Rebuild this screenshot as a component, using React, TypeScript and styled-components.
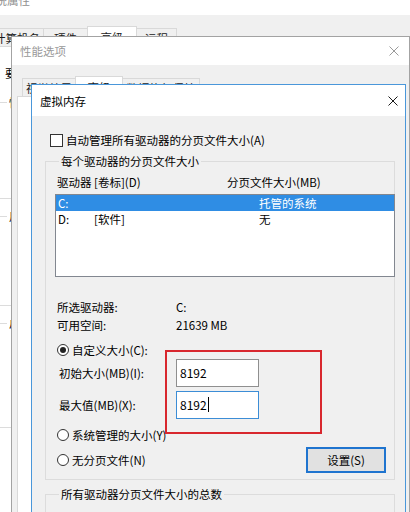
import React from "react";
import styled, { createGlobalStyle } from "styled-components";

const FONT = `"Noto Sans CJK SC", "Noto Sans", "Liberation Sans", sans-serif`;

const GlobalStyle = createGlobalStyle`
  html, body { margin: 0; padding: 0; background: #f0f0f0; }
  body { font-family: ${FONT}; }
`;

const Desktop = styled.div`
  position: relative;
  width: 410px;
  height: 512px;
  overflow: hidden;
  background: #f0f0f0;
  font-family: ${FONT};
  font-size: 11.5px;
  line-height: 14px;
  color: #000;
`;

const Win = styled.div<{ $x: number; $y: number; $w: number; $h: number; $z: number; $border: string }>`
  position: absolute;
  left: ${(p) => p.$x}px;
  top: ${(p) => p.$y}px;
  width: ${(p) => p.$w}px;
  height: ${(p) => p.$h}px;
  z-index: ${(p) => p.$z};
  box-sizing: border-box;
  border: 1px solid ${(p) => p.$border};
  background: #f0f0f0;
  display: flex;
  flex-direction: column;
`;

const TitleBar = styled.div<{ $h: number; $pl: number; $pr: number; $color: string }>`
  flex: none;
  height: ${(p) => p.$h}px;
  background: #fff;
  display: flex;
  align-items: center;
  justify-content: space-between;
  padding: 0 ${(p) => p.$pr}px 0 ${(p) => p.$pl}px;
  color: ${(p) => p.$color};
  white-space: nowrap;
`;

const Body = styled.div<{ $pad: string }>`
  flex: 1;
  display: flex;
  flex-direction: column;
  padding: ${(p) => p.$pad};
  min-height: 0;
`;

const TabRow = styled.div<{ $mt: number; $ml: number }>`
  display: flex;
  align-items: flex-end;
  height: 20px;
  margin: ${(p) => p.$mt}px 0 0 ${(p) => p.$ml}px;
  flex: none;
`;

const Tab = styled.div<{ $active?: boolean; $w: number }>`
  box-sizing: border-box;
  width: ${(p) => p.$w}px;
  height: ${(p) => (p.$active ? 21 : 18)}px;
  margin-right: -1px;
  margin-bottom: ${(p) => (p.$active ? -1 : 0)}px;
  background: ${(p) => (p.$active ? "#fff" : "#f0f0f0")};
  border: 1px solid #d9d9d9;
  border-bottom: none;
  display: flex;
  align-items: center;
  justify-content: center;
  position: relative;
  z-index: ${(p) => (p.$active ? 2 : 1)};
  white-space: nowrap;
  color: #1a1a1a;
`;

const TabPanel = styled.div<{ $pad: string }>`
  flex: 1;
  background: #fff;
  border: 1px solid #d9d9d9;
  padding: ${(p) => p.$pad};
  display: flex;
  flex-direction: column;
`;

const PlainText = styled.div<{ $ml: number }>`
  margin-left: ${(p) => p.$ml}px;
  line-height: 16px;
  white-space: nowrap;
`;

const BackGroup = styled.fieldset<{ $h: number; $mt: number }>`
  margin: ${(p) => p.$mt}px 0 0 0;
  padding: 0;
  height: ${(p) => p.$h}px;
  box-sizing: border-box;
  border: 1px solid #dcdcdc;
  min-width: 0;
  & > legend {
    margin-left: 8px;
    padding: 0 2px;
    line-height: 14px;
  }
`;

const CloseGlyph = ({ color }: { color: string }) => (
  <svg width="10" height="10" viewBox="0 0 10 10" style={{ display: "block" }}>
    <path d="M0.5 0.5 L9.5 9.5 M9.5 0.5 L0.5 9.5" stroke={color} strokeWidth="1" fill="none" />
  </svg>
);

const CheckRow = styled.div`
  display: flex;
  align-items: center;
  gap: 3px;
  height: 16px;
  padding-left: 5px;
  white-space: nowrap;
`;

const CheckBox = styled.span`
  box-sizing: border-box;
  width: 13px;
  height: 13px;
  border: 1px solid #333;
  background: #fff;
  flex: none;
`;

const Group = styled.fieldset<{ $mt: number; $pad: string }>`
  margin: ${(p) => p.$mt}px 0 0 0;
  padding: ${(p) => p.$pad};
  border: 1px solid #dcdcdc;
  min-width: 0;
  display: flex;
  flex-direction: column;
  & > legend {
    margin-left: 4px;
    padding: 0 2px;
    line-height: 14px;
    white-space: nowrap;
  }
`;

const HeaderRow = styled.div`
  display: flex;
  height: 14px;
  padding-left: 2px;
  white-space: nowrap;
`;

const Col = styled.span<{ $w?: number }>`
  flex: none;
  width: ${(p) => (p.$w ? `${p.$w}px` : "auto")};
  white-space: nowrap;
`;

const ListBox = styled.div`
  margin: 5px -1px 0 0;
  height: 83px;
  box-sizing: border-box;
  border: 1px solid #828790;
  background: #fff;
  display: flex;
  flex-direction: column;
`;

const ListRow = styled.div<{ $selected?: boolean }>`
  display: flex;
  align-items: center;
  height: 16px;
  padding-left: 2px;
  background: ${(p) => (p.$selected ? "#2f8de4" : "transparent")};
  color: ${(p) => (p.$selected ? "#fff" : "#000")};
`;

const InfoBlock = styled.div`
  margin-top: 21px;
  display: flex;
  flex-direction: column;
`;

const InfoRow = styled.div`
  display: flex;
  line-height: 18px;
  height: 18px;
  padding-left: 2px;
`;

const RadioRow = styled.div<{ $mt: number; $h?: number }>`
  display: flex;
  align-items: center;
  justify-content: space-between;
  margin-top: ${(p) => p.$mt}px;
  height: ${(p) => p.$h ?? 16}px;
  padding-left: 2px;
`;

const RadioLabel = styled.label`
  display: flex;
  align-items: center;
  gap: 3px;
  white-space: nowrap;
`;

const Radio = styled.span<{ $checked?: boolean }>`
  box-sizing: border-box;
  width: 12px;
  height: 12px;
  border-radius: 50%;
  border: 1px solid #333;
  background: #fff;
  display: flex;
  align-items: center;
  justify-content: center;
  flex: none;
  &::after {
    content: "";
    width: 6px;
    height: 6px;
    border-radius: 50%;
    background: ${(p) => (p.$checked ? "#222" : "transparent")};
  }
`;

const SizeBlock = styled.div`
  margin-top: 1px;
  display: flex;
  flex-direction: column;
  gap: 4px;
`;

const SizeRow = styled.div`
  display: flex;
  align-items: center;
  height: 28px;
  padding-left: 4px;
`;

const SizeLabel = styled.span`
  width: 117px;
  flex: none;
  white-space: nowrap;
`;

const ValueBox = styled.div<{ $focused?: boolean }>`
  box-sizing: border-box;
  width: 83px;
  height: 28px;
  background: #fff;
  border: 1px solid ${(p) => (p.$focused ? "#3c8dd6" : "#8f8f8f")};
  padding: 5px 0 0 3px;
  font-size: 12px;
  line-height: 16px;
  display: flex;
  align-items: flex-start;
`;

const Caret = styled.span`
  display: inline-block;
  width: 1px;
  height: 15px;
  margin-left: 1px;
  background: #000;
`;

const Button = styled.div`
  box-sizing: border-box;
  width: 80px;
  height: 26px;
  margin-right: 8px;
  border: 2px solid #1f74cf;
  background: #e1e1e1;
  display: flex;
  align-items: center;
  justify-content: center;
  white-space: nowrap;
`;

const Highlight = styled.div`
  position: absolute;
  left: 133px;
  top: 265px;
  width: 157px;
  height: 84px;
  box-sizing: border-box;
  border: 2px solid #d8272e;
  pointer-events: none;
`;

export default function App() {
  return (
    <>
      <GlobalStyle />
      <Desktop>
        {/* 系统属性 (back window) */}
        <Win $x={-26} $y={-16} $w={480} $h={560} $z={1} $border="#b5b5b5">
          <TitleBar $h={30} $pl={9} $pr={10} $color="#8f8f8f">
            <span>系统属性</span>
          </TitleBar>
          <Body $pad="11px 0 0 15px">
            <TabRow $mt={0} $ml={0}>
              <Tab $w={54}>计算机名</Tab>
              <Tab $w={45}>硬件</Tab>
              <Tab $w={50} $active>高级</Tab>
              <Tab $w={41}>远程</Tab>
            </TabRow>
            <TabPanel $pad="18px 0 0 7px">
              <PlainText $ml={7}>要进行大多数更改，你必须作为管理员登录。</PlainText>
              <BackGroup $mt={14} $h={104}>
                <legend>性能</legend>
              </BackGroup>
              <BackGroup $mt={10} $h={97}>
                <legend>用户配置文件</legend>
              </BackGroup>
              <BackGroup $mt={10} $h={112}>
                <legend>启动和故障恢复</legend>
              </BackGroup>
            </TabPanel>
          </Body>
        </Win>

        {/* 性能选项 */}
        <Win $x={11} $y={36} $w={399} $h={500} $z={2} $border="#a3a3a3">
          <TitleBar $h={28} $pl={8} $pr={10} $color="#999">
            <span>性能选项</span>
            <CloseGlyph color="#9a9a9a" />
          </TitleBar>
          <Body $pad="0 5px 0 5px">
            <TabRow $mt={11} $ml={5}>
              <Tab $w={54}>视觉效果</Tab>
              <Tab $w={48} $active>高级</Tab>
              <Tab $w={78}>数据执行保护</Tab>
            </TabRow>
            <TabPanel $pad="0" />
          </Body>
        </Win>

        {/* 虚拟内存 */}
        <Win $x={31} $y={84} $w={375} $h={440} $z={3} $border="#4a97da">
          <TitleBar $h={31} $pl={8} $pr={7} $color="#000">
            <span>虚拟内存</span>
            <CloseGlyph color="#1a1a1a" />
          </TitleBar>
          <Body $pad="17px 10px 0 13px">
            <CheckRow>
              <CheckBox />
              <span>自动管理所有驱动器的分页文件大小(A)</span>
            </CheckRow>

            <Group $mt={7} $pad="7px 0 6px 9px">
              <legend>每个驱动器的分页文件大小</legend>
              <HeaderRow>
                <Col $w={170}>驱动器 [卷标](D)</Col>
                <Col>分页文件大小(MB)</Col>
              </HeaderRow>
              <ListBox>
                <ListRow $selected>
                  <Col $w={36}>C:</Col>
                  <Col $w={165}></Col>
                  <Col>托管的系统</Col>
                </ListRow>
                <ListRow>
                  <Col $w={36}>D:</Col>
                  <Col $w={165}>[软件]</Col>
                  <Col>无</Col>
                </ListRow>
              </ListBox>

              <InfoBlock>
                <InfoRow>
                  <Col $w={119}>所选驱动器:</Col>
                  <Col>C:</Col>
                </InfoRow>
                <InfoRow>
                  <Col $w={119}>可用空间:</Col>
                  <Col>21639 MB</Col>
                </InfoRow>
              </InfoBlock>

              <RadioRow $mt={8}>
                <RadioLabel>
                  <Radio $checked />
                  <span>自定义大小(C):</span>
                </RadioLabel>
              </RadioRow>

              <SizeBlock>
                <SizeRow>
                  <SizeLabel>初始大小(MB)(I):</SizeLabel>
                  <ValueBox>8192</ValueBox>
                </SizeRow>
                <SizeRow>
                  <SizeLabel>最大值(MB)(X):</SizeLabel>
                  <ValueBox $focused>
                    8192
                    <Caret />
                  </ValueBox>
                </SizeRow>
              </SizeBlock>

              <RadioRow $mt={8}>
                <RadioLabel>
                  <Radio />
                  <span>系统管理的大小(Y)</span>
                </RadioLabel>
              </RadioRow>

              <RadioRow $mt={4} $h={26}>
                <RadioLabel>
                  <Radio />
                  <span>无分页文件(N)</span>
                </RadioLabel>
                <Button>设置(S)</Button>
              </RadioRow>
            </Group>

            <Group $mt={7} $pad="7px 0 6px 9px">
              <legend>所有驱动器分页文件大小的总数</legend>
              <HeaderRow />
            </Group>
          </Body>
          <Highlight />
        </Win>
      </Desktop>
    </>
  );
}
